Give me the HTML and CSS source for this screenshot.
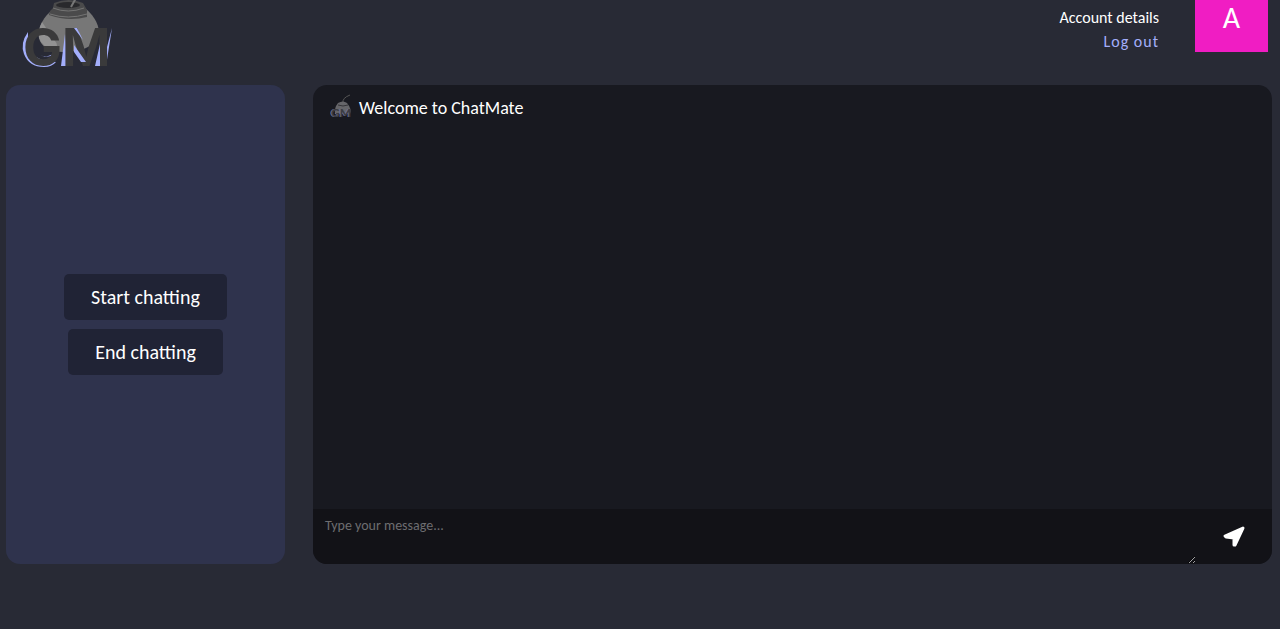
FILE: index.html
```html
<!DOCTYPE html>
<html lang="en">
<head>
<meta charset="utf-8">
<meta name="viewport" content="width=device-width, initial-scale=1">
<title>ChatMate</title>
<link rel="stylesheet" href="styles.css">
</head>
<body>
<header class="topbar">
  <svg class="logo" viewBox="0 0 104 84" role="img" aria-label="ChatMate">
    <path fill="#777" d="M33 10C24 15 18 27 19 38C21 47 30 52 44 52C62 52 78 45 79 33C79 22 71 13 66 9Z"/>
    <path fill="#929292" d="M22 22L35 41Q39 45 35 51Q22 47 19 38Q17 31 22 22Z"/>
    <path fill="#4a4a4b" d="M34 3Q49-3 63 3L67 10L67 17Q48 22 29 15L30 11L33 8Z"/>
    <ellipse cx="48" cy="5" rx="12" ry="3" fill="#29292c"/>
    <path d="M33 8Q48 14 64 8M30 14Q48 20 67 14" fill="none" stroke="#747474" stroke-width="1"/>
    <path d="M51 7L56-2" stroke="#777" stroke-width="2"/>
    <path fill="#a3aefb" d="M8 32Q0 43 4 54Q9 67 24 67Q32 67 36 62L22 60Q10 56 8 43ZM20 55Q28 59 34 54L25 57Z"/>
    <path fill="#a3aefb" d="M45 34L41 66H48ZM92 28L82 66H86Z"/>
    <text class="logo-text" x="3" y="66">G</text>
    <text class="logo-text" x="42" y="66">M</text>
    <path fill="#a3aefb" d="M54 45L66 62L61 62L54 52ZM80 44V66H75ZM54 28L57 28L63 40Z"/>
  </svg>
  <div class="account">
    <div class="account-links">
      <a class="details" href="#account">Account details</a>
      <a class="logout" href="#logout">Log out</a>
    </div>
    <div class="avatar">A</div>
  </div>
</header>
<main class="layout">
  <aside class="sidebar">
    <button class="action" type="button">Start chatting</button>
    <button class="action" type="button">End chatting</button>
  </aside>
  <section class="chat">
    <div class="messages">
      <svg class="mark" viewBox="0 0 24 28" aria-hidden="true">
        <path d="M13 10Q12 5 20 2" fill="none" stroke="#555" stroke-width="1"/>
        <path fill="#66666a" d="M8 10Q13 7 17 10Q22 16 20 21H5Q4 15 8 10Z"/>
        <path d="M8 12Q13 14 18 12" fill="none" stroke="#343438"/>
        <text class="mark-text mark-shade" x="0" y="24">GM</text>
        <text class="mark-text" x="1" y="24">GM</text>
      </svg>
      <p class="welcome">Welcome to ChatMate</p>
    </div>
    <form class="composer">
      <textarea class="message" aria-label="Message" placeholder="Type your message..."></textarea>
      <button class="send" type="button" aria-label="Send">
        <svg class="send-icon" viewBox="0 0 24 24"><path fill="#fff" stroke="#fff" stroke-width="3" stroke-linejoin="round" d="M21 3L3 11L4 12L12 13L12 20L13 20Z"/></svg>
      </button>
    </form>
  </section>
</main>
</body>
</html>
```
FILE: styles.css
```css
* { box-sizing: border-box; }
body {
  margin: 0;
  padding: 0 8px 0 6px;
  min-height: 100vh;
  background: #282a35;
  color: #fff;
  font-family: Carlito, Lato, sans-serif;
}
.topbar {
  display: flex;
  justify-content: space-between;
  align-items: flex-start;
  height: 85px;
  padding: 0 4px 0 14px;
}
.logo { width: 104px; height: 84px; }
.logo-text { font: 700 52px Inter, sans-serif; fill: #3a3a3b; }
.account { display: flex; gap: 36px; }
.account-links {
  display: flex;
  flex-direction: column;
  align-items: flex-end;
  padding-top: 6px;
  font-size: 16px;
  line-height: 24px;
}
.account-links a { text-decoration: none; }
.details { color: #fff; }
.logout { color: #a3aefb; letter-spacing: 1px; }
.avatar {
  width: 73px;
  height: 52px;
  background: #f01dc3;
  font-size: 30px;
  line-height: 36px;
  text-align: center;
}
.layout {
  display: grid;
  grid-template-columns: 279fr 959fr;
  gap: 28px;
  min-height: calc(100vh - 150px);
}
.sidebar {
  display: flex;
  flex-direction: column;
  align-items: center;
  justify-content: center;
  gap: 9px;
  border-radius: 14px;
  background: #2f334d;
}
.action {
  padding: 11px 27px;
  border: 0;
  border-radius: 5px;
  background: #202335;
  color: #fff;
  font: 20px/24px Carlito, Lato, sans-serif;
}
.chat {
  display: flex;
  flex-direction: column;
  overflow: hidden;
  border-radius: 14px;
  background: #181920;
}
.messages {
  display: flex;
  flex: 1;
  align-items: flex-start;
  gap: 5px;
  padding: 8px 17px;
}
.mark { width: 24px; height: 28px; }
.mark-text { font: 900 12px Lato, sans-serif; fill: #3c3c42; }
.mark-shade { fill: #6d7198; }
.welcome { margin: 0; font-size: 18px; line-height: 30px; }
.composer { display: flex; height: 55px; background: #121217; }
.message {
  flex: 1;
  padding: 8px 12px;
  border: 0;
  outline: 0;
  background: transparent;
  color: #fff;
  font: 14px/18px Carlito, Lato, sans-serif;
}
.message::placeholder { color: #6d6d70; }
.send {
  display: grid;
  place-items: center;
  width: 76px;
  padding: 0;
  border: 0;
  background: transparent;
}
.send-icon { width: 24px; height: 24px; }
```
